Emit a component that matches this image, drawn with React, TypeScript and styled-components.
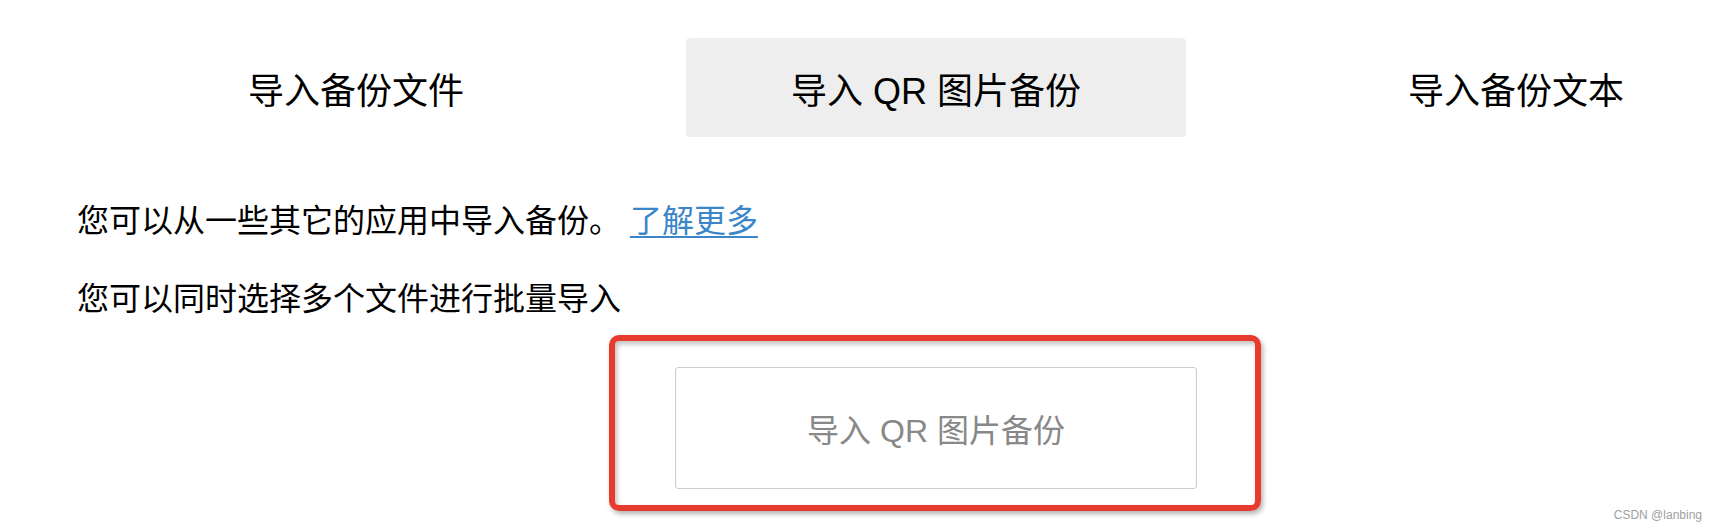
import React from "react";
import styled, { createGlobalStyle } from "styled-components";

const GlobalStyle = createGlobalStyle`
    html, body {
        margin: 0;
        padding: 0;
        background: #ffffff;
        overflow: hidden;
    }
    body {
        font-family: "Liberation Sans", "Noto Sans CJK SC", sans-serif;
        color: #000000;
    }
`

const Page = styled.div`
    position: relative;
    width: 1718px;
    height: 530px;
    padding-top: 38px;
    box-sizing: border-box;
`

const TabBar = styled.div`
    display: flex;
    gap: 80px;
    padding-left: 106px;
    width: max-content;
`

const Tab = styled.div<{ $active?: boolean }>`
    width: 500px;
    height: 99px;
    display: flex;
    align-items: center;
    justify-content: center;
    font-size: 36px;
    border-radius: 4px;
    background: ${p => (p.$active ? "#eeeeee" : "transparent")};
    cursor: pointer;
    white-space: nowrap;
`

const Content = styled.div`
    padding-left: 77px;
`

const Text = styled.p<{ $top: number }>`
    margin: ${p => p.$top}px 0 0 0;
    font-size: 32px;
    line-height: 48px;
    white-space: nowrap;
`

const Link = styled.a`
    color: #3a86c8;
    text-decoration: underline;
    text-underline-offset: 4px;
    text-decoration-thickness: 2px;
`

const ButtonRow = styled.div`
    margin-top: 44px;
    margin-left: 675px;
    position: relative;
    width: 522px;
`

const ImportButton = styled.button`
    width: 522px;
    height: 122px;
    display: flex;
    align-items: center;
    justify-content: center;
    background: #ffffff;
    border: 1px solid #cccccc;
    border-radius: 3px;
    font-family: inherit;
    font-size: 32px;
    color: #888888;
    cursor: pointer;
`

// annotation drawn over the button in the screenshot
const Highlight = styled.div`
    position: absolute;
    top: -32px;
    left: -66px;
    right: -64px;
    bottom: -22px;
    border: 6px solid #e63b2e;
    border-radius: 10px;
    box-shadow: 2px 3px 5px rgba(0, 0, 0, 0.3), inset 2px 3px 5px rgba(0, 0, 0, 0.25);
    pointer-events: none;
`

const Watermark = styled.div`
    position: absolute;
    right: 16px;
    bottom: 8px;
    font-family: "Liberation Sans", Arial, sans-serif;
    font-size: 12px;
    color: #a0a0a0;
`

const tabs = ["导入备份文件", "导入 QR 图片备份", "导入备份文本"]

const App = () => {
    return (
        <Page>
            <GlobalStyle />
            <TabBar>
                {tabs.map((t, i) => (
                    <Tab key={t} $active={i === 1}>{t}</Tab>
                ))}
            </TabBar>
            <Content>
                <Text $top={60}>
                    您可以从一些其它的应用中导入备份。 <Link href="#">了解更多</Link>
                </Text>
                <Text $top={30}>您可以同时选择多个文件进行批量导入</Text>
            </Content>
            <ButtonRow>
                <ImportButton>导入 QR 图片备份</ImportButton>
                <Highlight />
            </ButtonRow>
            <Watermark>CSDN @lanbing</Watermark>
        </Page>
    )
}

export default App
